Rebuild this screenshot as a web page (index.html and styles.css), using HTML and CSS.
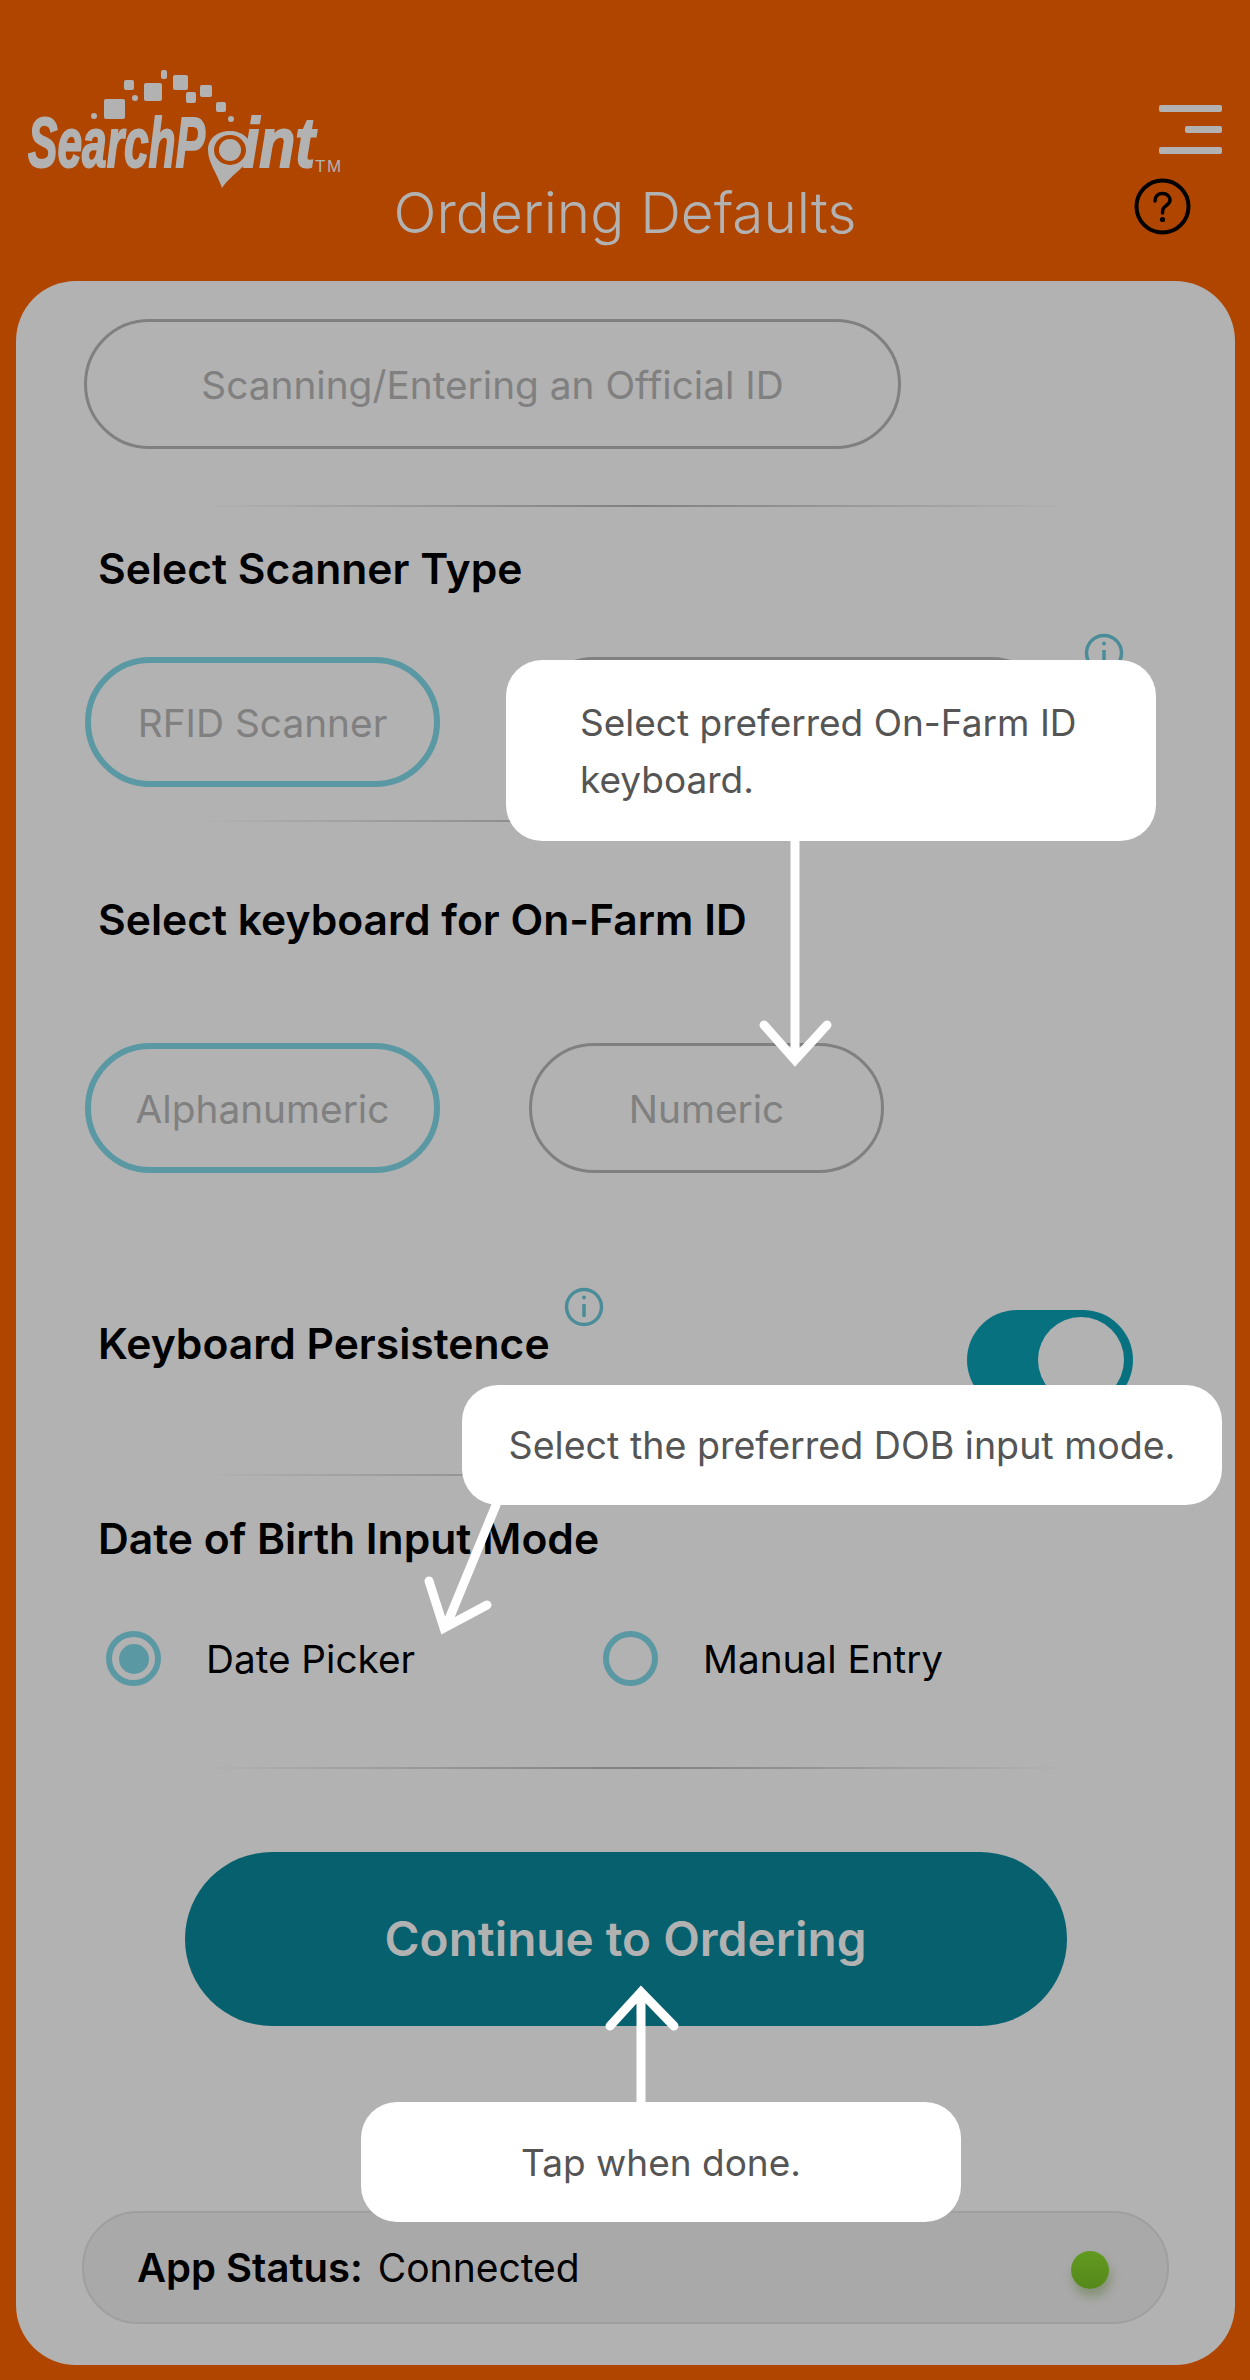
FILE: index.html
```html
<!DOCTYPE html>
<html lang="en">
<head>
    <meta charset="UTF-8">
    <meta name="viewport" content="width=device-width, initial-scale=1.0">
    <title>Ordering Defaults</title>
    <link rel="stylesheet" href="styles.css">
</head>
<body>
    <div class="screen">
        <header class="top-bar">
            <svg class="logo" viewBox="20 64 330 130" width="330" height="130">
                <g class="logo-bits">
                    <rect x="104" y="99" width="21" height="20" rx="2"/>
                    <rect x="124" y="80" width="10" height="10" rx="2"/>
                    <rect x="144" y="83" width="18" height="18" rx="2"/>
                    <rect x="161" y="70" width="6" height="9" rx="2"/>
                    <rect x="173" y="75" width="15" height="15" rx="2"/>
                    <rect x="186" y="92" width="10" height="11" rx="2"/>
                    <rect x="200" y="85" width="12" height="12" rx="2"/>
                    <rect x="216" y="102" width="10" height="10" rx="2"/>
                    <circle cx="135" cy="98" r="3"/>
                    <circle cx="94" cy="116" r="3"/>
                    <circle cx="231" cy="119" r="3"/>
                </g>
                <text class="logo-word" transform="translate(28 167) scale(0.632 1)">SearchP</text>
                <text class="logo-word" transform="translate(243 167) scale(0.84 1)">int</text>
                <path class="logo-pin" d="M222 188 C217 173 208 163 208 150 C208 138 218 131 230 131 C242 131 252 139 252 150 C252 164 231 174 222 188Z"/>
                <ellipse class="logo-hole" cx="230" cy="150" rx="16" ry="15"/>
                <ellipse class="logo-pin" cx="230" cy="150" rx="11" ry="11"/>
                <text class="logo-tm" x="315" y="172">TM</text>
            </svg>
            <h1 class="page-title">Ordering Defaults</h1>
            <div class="top-actions">
                <div class="menu-icon">
                    <span class="menu-line"></span>
                    <span class="menu-line short"></span>
                    <span class="menu-line"></span>
                </div>
                <svg class="help-icon" viewBox="0 0 57 57" width="57" height="57">
                    <circle cx="28.5" cy="28.5" r="26"/>
                    <path d="M21 23 C21 18 24.500 15.500 28.500 15.500 C33 15.500 36 18.500 36 22 C36 26 32 27.500 30 29.500 C28.800 30.700 28.500 32 28.500 35"/>
                    <circle class="help-dot" cx="28.500" cy="41.500" r="2.600"/>
                </svg>
            </div>
        </header>

        <main class="card">
            <div class="pill pill-wide">Scanning/Entering an Official ID</div>
            <div class="divider first"></div>

            <h2 class="section-title scanner-title">Select Scanner Type</h2>
            <div class="pill-row scanner-row">
                <div class="pill active">RFID Scanner</div>
                <div class="pill pill-hidden-label"></div>
                <svg class="info-icon scanner-info" viewBox="0 0 40 40" width="40" height="40">
                    <circle cx="20" cy="20" r="17.500"/>
                    <path d="M20 17 V30"/>
                    <circle class="info-dot" cx="20" cy="10.500" r="2"/>
                </svg>
            </div>
            <div class="divider second"></div>

            <h2 class="section-title keyboard-title">Select keyboard for On-Farm ID</h2>
            <div class="pill-row keyboard-row">
                <div class="pill active">Alphanumeric</div>
                <div class="pill">Numeric</div>
            </div>

            <div class="persist-row">
                <h2 class="section-title persist-title">
                    Keyboard Persistence
                    <svg class="info-icon persist-info" viewBox="0 0 40 40" width="40" height="40">
                        <circle cx="20" cy="20" r="17.500"/>
                        <path d="M20 17 V30"/>
                        <circle class="info-dot" cx="20" cy="10.500" r="2"/>
                    </svg>
                </h2>
                <div class="toggle"><span class="toggle-thumb"></span></div>
            </div>
            <div class="divider third"></div>

            <h2 class="section-title dob-title">Date of Birth Input Mode</h2>
            <div class="radio-row">
                <label class="radio-item"><span class="radio checked"></span>Date Picker</label>
                <label class="radio-item"><span class="radio"></span>Manual Entry</label>
            </div>
            <div class="divider fourth"></div>

            <button class="continue-btn">Continue to Ordering</button>

            <div class="status-bar">
                <strong class="status-label">App Status:</strong>
                <span class="status-value">Connected</span>
                <span class="status-dot"></span>
            </div>
        </main>

        <!-- coach marks on top of the page -->
        <svg class="arrows" viewBox="0 0 1250 2380" width="1250" height="2380">
            <path d="M795 841 V1058 M764 1025 L795 1060 L827 1025"/>
            <path d="M496 1505 L447 1624 M429 1581 L444 1628 L487 1605"/>
            <path d="M641 2102 V1994 M610 2026 L641 1992 L674 2026"/>
        </svg>
        <div class="coach coach-keyboard">Select preferred On-Farm ID keyboard.</div>
        <div class="coach coach-dob">Select the preferred DOB input mode.</div>
        <div class="coach coach-done">Tap when done.</div>
    </div>
</body>
</html>
```

FILE: styles.css
```css
* {
    box-sizing: border-box;
}
body {
    margin: 0;
    font-family: Inter, "Noto Sans", sans-serif;
    background-color: #b04500;
}
.screen {
    position: relative;
    width: 1250px;
    height: 2380px;
    overflow: hidden;
}

/* header */
.top-bar {
    height: 281px;
    display: grid;
    grid-template-columns: 1fr auto 1fr;
    align-items: start;
}
.logo {
    display: block;
    margin: 64px 0 0 20px;
}
.logo-bits,
.logo-pin {
    fill: #b2b2b2;
}
.logo-hole {
    fill: #b04500;
}
.logo-word {
    font-family: "Liberation Sans", Arial, sans-serif;
    font-weight: 700;
    font-style: italic;
    font-size: 70px;
    fill: #b2b2b2;
    stroke: #b2b2b2;
    stroke-width: 2;
}
.logo-tm {
    font-family: "Liberation Sans", Arial, sans-serif;
    font-size: 17px;
    letter-spacing: 1.5px;
    fill: #b2b2b2;
}
.page-title {
    margin: 181px 0 0;
    font-size: 56.6px;
    line-height: 63px;
    font-weight: 300;
    color: #b2b2b2;
}
.top-actions {
    display: flex;
    flex-direction: column;
    align-items: flex-end;
    padding: 105px 28px 0 0;
}
.menu-icon {
    display: flex;
    flex-direction: column;
    align-items: flex-end;
    gap: 14px;
}
.menu-line {
    display: block;
    width: 63px;
    height: 7px;
    border-radius: 2px;
    background-color: #b2b2b2;
}
.menu-line.short {
    width: 37px;
}
.help-icon {
    display: block;
    margin: 24px 31px 0 0;
    fill: none;
    stroke: #000;
    stroke-width: 4;
}
.help-icon path {
    stroke-width: 3.500;
    stroke-linecap: round;
}
.help-dot {
    fill: #000;
    stroke: none;
}

/* card */
.card {
    width: 1219px;
    height: 2084px;
    margin-left: 16px;
    padding: 38px 66px 0;
    border-radius: 60px;
    background-color: #b2b2b2;
}
.pill {
    display: flex;
    align-items: center;
    justify-content: center;
    width: 355px;
    height: 130px;
    border: 3px solid #808080;
    border-radius: 65px;
    font-size: 38.8px;
    color: #808080;
}
.pill.active {
    border: 6px solid #5a98a3;
}
.pill-wide {
    width: 817px;
    margin-left: 2px;
}
.pill-hidden-label {
    width: 527px;
}
.pill-row {
    position: relative;
    display: flex;
    gap: 89px;
    margin-left: 3px;
}
.divider {
    height: 2px;
    margin-left: 118px;
    width: 872px;
    background: linear-gradient(to right, rgba(128, 128, 128, 0), #808080 50%, rgba(128, 128, 128, 0));
}
.divider.first {
    margin-top: 56px;
}
.divider.second {
    margin-top: 33px;
}
.divider.third {
    margin-top: 64px;
}
.divider.fourth {
    margin-top: 81px;
}
.section-title {
    margin: 0;
    padding-left: 16px;
    font-size: 42.6px;
    line-height: 48px;
    font-weight: 600;
    color: #000;
}
.scanner-title {
    margin-top: 38px;
}
.scanner-row {
    margin-top: 64px;
}
.keyboard-title {
    margin-top: 74px;
}
.keyboard-row {
    margin-top: 99px;
}
.dob-title {
    margin-top: 39px;
}
.info-icon {
    position: absolute;
    fill: none;
    stroke: #4a8d99;
    stroke-width: 3.500;
}
.info-dot {
    fill: #4a8d99;
    stroke: none;
}
.scanner-info {
    left: 999px;
    top: -24px;
}
.persist-row {
    display: flex;
    justify-content: space-between;
    align-items: flex-start;
    margin-top: 137px;
}
.persist-title {
    position: relative;
    margin-top: 10px;
}
.persist-info {
    left: 482px;
    top: -33px;
}
.toggle {
    display: flex;
    justify-content: flex-end;
    width: 166px;
    height: 100px;
    margin-right: 36px;
    padding: 7px 9px;
    border-radius: 50px;
    background-color: #087180;
}
.toggle-thumb {
    width: 86px;
    height: 86px;
    border-radius: 50%;
    background-color: #b2b2b2;
}
.radio-row {
    display: flex;
    margin-top: 68px;
    padding-left: 24px;
}
.radio-item {
    display: flex;
    align-items: center;
    gap: 45px;
    width: 497px;
    font-size: 38.7px;
    color: #000;
}
.radio {
    display: flex;
    align-items: center;
    justify-content: center;
    width: 55px;
    height: 55px;
    border: 6px solid #5a98a3;
    border-radius: 50%;
}
.radio.checked::after {
    content: "";
    width: 30px;
    height: 30px;
    border-radius: 50%;
    background-color: #5a98a3;
}
.continue-btn {
    display: block;
    width: 882px;
    height: 174px;
    margin: 83px auto 0;
    border: none;
    border-radius: 87px;
    background-color: #07606e;
    color: #b2b2b2;
    font-family: inherit;
    font-size: 47.700px;
    font-weight: 600;
}
.status-bar {
    display: flex;
    align-items: center;
    gap: 15px;
    height: 113px;
    margin-top: 185px;
    padding: 0 58px 0 53px;
    border: 2px solid #9f9f9f;
    border-radius: 56px;
    background-color: #a9a9a9;
    font-size: 39px;
    color: #000;
}
.status-label {
    font-size: 40px;
    font-weight: 600;
}
.status-dot {
    width: 38px;
    height: 38px;
    margin: 4px 0 0 auto;
    border-radius: 50%;
    background: linear-gradient(#629a20, #55881b);
    box-shadow: 2px 8px 10px rgba(90, 120, 60, 0.45);
}

/* coach marks */
.arrows {
    position: absolute;
    left: 0;
    top: 0;
    fill: none;
    stroke: #fff;
    stroke-width: 9;
    stroke-linecap: round;
    stroke-linejoin: miter;
}
.coach {
    position: absolute;
    display: flex;
    align-items: center;
    border-radius: 36px;
    background-color: #fff;
    color: #555;
    font-size: 37px;
}
.coach-keyboard {
    left: 506px;
    top: 660px;
    width: 650px;
    height: 181px;
    padding: 0 60px 0 74px;
    line-height: 57px;
}
.coach-dob {
    left: 462px;
    top: 1385px;
    width: 760px;
    height: 120px;
    justify-content: center;
    font-size: 37.600px;
}
.coach-done {
    left: 361px;
    top: 2102px;
    width: 600px;
    height: 120px;
    justify-content: center;
}
```
